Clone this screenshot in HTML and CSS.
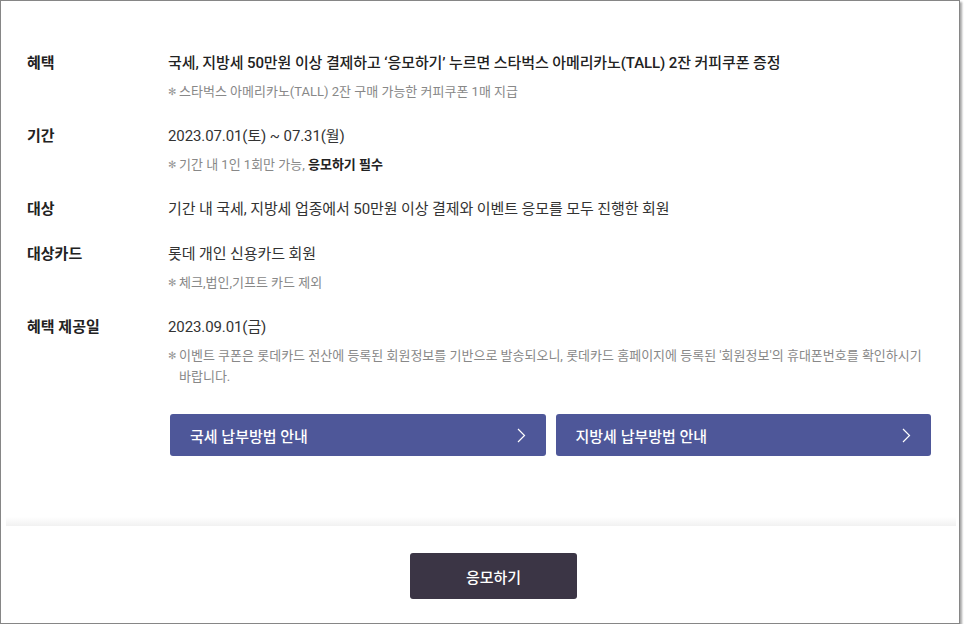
FILE: index.html
```html
<!DOCTYPE html>
<html lang="ko">
<head>
    <meta charset="UTF-8">
    <meta name="viewport" content="width=device-width, initial-scale=1.0">
    <title>응모하기 이벤트</title>
    <link rel="stylesheet" href="styles.css">
</head>
<body>
    <div class="frame">
        <div class="event-info">
            <div class="info-row">
                <div class="info-label">혜택</div>
                <div class="info-body">
                    <p class="info-main strong">국세, 지방세 50만원 이상 결제하고 ‘응모하기’ 누르면 스타벅스 아메리카노(TALL) 2잔 커피쿠폰 증정</p>
                    <p class="info-note"><span class="mark">✻</span>스타벅스 아메리카노(TALL) 2잔 구매 가능한 커피쿠폰 1매 지급</p>
                </div>
            </div>
            <div class="info-row">
                <div class="info-label">기간</div>
                <div class="info-body">
                    <p class="info-main">2023.07.01(토) ~ 07.31(월)</p>
                    <p class="info-note"><span class="mark">✻</span>기간 내 1인 1회만 가능, <b>응모하기 필수</b></p>
                </div>
            </div>
            <div class="info-row">
                <div class="info-label">대상</div>
                <div class="info-body">
                    <p class="info-main">기간 내 국세, 지방세 업종에서 50만원 이상 결제와 이벤트 응모를 모두 진행한 회원</p>
                </div>
            </div>
            <div class="info-row">
                <div class="info-label">대상카드</div>
                <div class="info-body">
                    <p class="info-main">롯데 개인 신용카드 회원</p>
                    <p class="info-note"><span class="mark">✻</span>체크,법인,기프트 카드 제외</p>
                </div>
            </div>
            <div class="info-row">
                <div class="info-label">혜택 제공일</div>
                <div class="info-body">
                    <p class="info-main">2023.09.01(금)</p>
                    <p class="info-note"><span class="mark">✻</span>이벤트 쿠폰은 롯데카드 전산에 등록된 회원정보를 기반으로 발송되오니, 롯데카드 홈페이지에 등록된 '회원정보'의 휴대폰번호를 확인하시기 바랍니다.</p>
                </div>
            </div>

            <div class="guide-buttons">
                <a class="guide-btn" href="#">국세 납부방법 안내
                    <svg width="9" height="15" viewBox="0 0 9 15"><path d="M1 1l6.5 6.5L1 14" fill="none" stroke="#fff" stroke-width="1.2"/></svg>
                </a>
                <a class="guide-btn" href="#">지방세 납부방법 안내
                    <svg width="9" height="15" viewBox="0 0 9 15"><path d="M1 1l6.5 6.5L1 14" fill="none" stroke="#fff" stroke-width="1.2"/></svg>
                </a>
            </div>
        </div>

        <div class="divider"></div>

        <div class="footer">
            <button class="apply-btn">응모하기</button>
        </div>
    </div>
</body>
</html>
```

FILE: styles.css
```css
body {
    margin: 0;
    background-color: #fff;
    font-family: Roboto, "Noto Sans CJK KR", sans-serif;
    color: #333;
}

p {
    margin: 0;
}

.frame {
    width: 958px;
    height: 622px;
    border: 1px solid #868686;
    box-shadow: 2px 2px 2px rgba(0, 0, 0, 0.35);
    background-color: #fff;
    display: flex;
    flex-direction: column;
}

.event-info {
    padding: 51px 28px 0 26px;
}

.info-row {
    display: flex;
    margin-bottom: 23px;
}

.info-label {
    width: 141px;
    flex-shrink: 0;
    font-size: 15px;
    font-weight: bold;
    line-height: 22px;
    color: #222;
}

.info-main {
    font-size: 15px;
    line-height: 22px;
    letter-spacing: -0.1px;
    color: #333;
}

.info-main.strong {
    font-weight: 500;
    color: #222;
}

.info-note {
    margin-top: 7px;
    padding-left: 11px;
    text-indent: -11px;
    font-size: 13px;
    line-height: 21px;
    color: #888;
    word-break: keep-all;
}

.info-note b {
    color: #222;
}

.mark {
    display: inline-block;
    width: 11px;
    line-height: 1;
    vertical-align: 1px;
    text-indent: 0;
    font-family: "DejaVu Sans", sans-serif;
    font-size: 10px;
    color: #999;
}

.guide-buttons {
    display: flex;
    gap: 10px;
    margin: 27px 0 0 143px;
}

.guide-btn {
    flex: 1;
    height: 42px;
    display: flex;
    align-items: center;
    justify-content: space-between;
    padding: 0 20px;
    border-radius: 3px;
    background-color: #4e5799;
    color: #fff;
    font-size: 15px;
    font-weight: 500;
    text-decoration: none;
}

.divider {
    height: 9px;
    margin: 61px 3px 0 5px;
    background: linear-gradient(#fff, #f1f1f1);
}

.footer {
    display: flex;
    justify-content: center;
    padding: 27px 0 0 27px;
}

.apply-btn {
    width: 167px;
    height: 46px;
    border: none;
    border-radius: 3px;
    background-color: #3b3545;
    color: #fff;
    font-family: Roboto, "Noto Sans CJK KR", sans-serif;
    font-size: 15px;
    font-weight: 500;
    cursor: pointer;
}
```
